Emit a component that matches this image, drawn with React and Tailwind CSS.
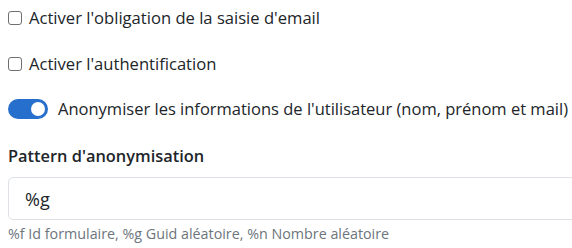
import React, { useState } from "react";

const App = () => {
  const [emailRequired, setEmailRequired] = useState(false);
  const [auth, setAuth] = useState(false);
  const [anonymize, setAnonymize] = useState(true);
  const [pattern, setPattern] = useState("%g");

  return (
    <div className="w-[572px] h-[248px] overflow-hidden bg-white pl-2 text-[#212529] font-['Open_Sans',sans-serif]">
      {/* Options */}
      <label className="flex items-center h-[20px] mt-[8px] text-[16.6px] whitespace-nowrap">
        <input
          type="checkbox"
          checked={emailRequired}
          onChange={(e) => setEmailRequired(e.target.checked)}
          className="appearance-none w-[14px] h-[14px] border border-[#6f6f6f] rounded-[3px] bg-white mr-[7px]"
        />
        Activer l'obligation de la saisie d'email
      </label>

      <label className="flex items-center h-[20px] mt-[26px] text-[16.6px] whitespace-nowrap">
        <input
          type="checkbox"
          checked={auth}
          onChange={(e) => setAuth(e.target.checked)}
          className="appearance-none w-[14px] h-[14px] border border-[#6f6f6f] rounded-[3px] bg-white mr-[7px]"
        />
        Activer l'authentification
      </label>

      <label className="flex items-center h-[22px] mt-[24px] text-[16.5px] whitespace-nowrap">
        <button
          type="button"
          onClick={() => setAnonymize(!anonymize)}
          className={`relative shrink-0 w-[40px] h-[20px] rounded-full mr-[10px] ${anonymize ? "bg-[#276fcc]" : "bg-gray-300"}`}
        >
          <span
            className={`absolute top-[3px] w-[14px] h-[14px] rounded-full bg-white ${anonymize ? "left-[23px]" : "left-[3px]"}`}
          />
        </button>
        Anonymiser les informations de l'utilisateur (nom, prénom et mail)
      </label>

      {/* Pattern */}
      <div className="mt-[25px] text-[16.4px] font-semibold leading-[22px]">Pattern d'anonymisation</div>
      <input
        type="text"
        value={pattern}
        onChange={(e) => setPattern(e.target.value)}
        className="block mt-[10px] w-[600px] h-[43px] border border-[#dee2e6] rounded-[5px] px-4 text-[18px] outline-none"
      />
      <div className="mt-[4px] text-[14.3px] text-[#6c757d] leading-[20px] whitespace-nowrap">
        %f Id formulaire, %g Guid aléatoire, %n Nombre aléatoire
      </div>
    </div>
  );
};

export default App;
